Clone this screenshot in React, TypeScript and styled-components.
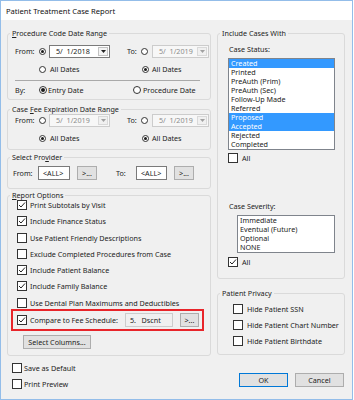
import React from "react";
import styled, { createGlobalStyle } from "styled-components";

const Global = createGlobalStyle`
  html, body { margin: 0; padding: 0; background: #ffffff; }
  body {
    font-family: "Noto Sans", "Liberation Sans", sans-serif;
    font-size: 7.2px;
    color: #222222;
  }
  * { box-sizing: border-box; }
`;

const Window = styled.div`
  width: 353px;
  height: 400px;
  border: 1px solid #93bde9;
  background: #f0f0f0;
  display: flex;
  flex-direction: column;
`;

const TitleBar = styled.div`
  flex: none;
  height: 19px;
  background: #ffffff;
  display: flex;
  align-items: center;
  padding-left: 5px;
  font-size: 7.6px;
  color: #111111;
`;

const Body = styled.div`
  flex: 1;
  display: flex;
  gap: 6px;
  padding: 9px 7px 0 6px;
`;

const Column = styled.div<{ $w: number }>`
  width: ${(p) => p.$w}px;
  display: flex;
  flex-direction: column;
`;

const Group = styled.fieldset<{ $mt?: number }>`
  margin: ${(p) => p.$mt ?? 0}px 0 0 0;
  padding: 0;
  min-width: 0;
  border: 1px solid #dadada;
  border-radius: 3px;
`;

const Legend = styled.legend`
  margin-left: 2px;
  padding: 0 2px;
  line-height: 8px;
  font-size: 7.2px;
  color: #222222;
`;

const GroupBody = styled.div<{ $pt: number; $pb: number; $pl: number }>`
  display: flex;
  flex-direction: column;
  padding: ${(p) => p.$pt}px 0 ${(p) => p.$pb}px ${(p) => p.$pl}px;
`;

const Row = styled.div<{ $h?: number; $mt?: number; $pl?: number }>`
  display: flex;
  align-items: center;
  height: ${(p) => p.$h ?? 14}px;
  margin-top: ${(p) => p.$mt ?? 0}px;
  padding-left: ${(p) => p.$pl ?? 0}px;
  white-space: nowrap;
`;

const Half = styled.div<{ $w?: number }>`
  display: flex;
  align-items: center;
  height: 100%;
  ${(p) => (p.$w ? `width: ${p.$w}px;` : "flex: 1;")}
`;

const Label = styled.span<{ $w?: number; $ml?: number }>`
  display: inline-block;
  ${(p) => (p.$w ? `width: ${p.$w}px;` : "")}
  margin-left: ${(p) => p.$ml ?? 0}px;
  flex: none;
`;

const RadioRing = styled.span<{ $size: number; $ml?: number; $mr?: number }>`
  flex: none;
  width: ${(p) => p.$size}px;
  height: ${(p) => p.$size}px;
  margin-left: ${(p) => p.$ml ?? 0}px;
  margin-right: ${(p) => p.$mr ?? 3}px;
  border-radius: 50%;
  border: 1px solid #333333;
  background: #ffffff;
  display: flex;
  align-items: center;
  justify-content: center;
`;

const RadioDot = styled.span<{ $size: number }>`
  width: ${(p) => p.$size}px;
  height: ${(p) => p.$size}px;
  border-radius: 50%;
  background: #1a1a1a;
`;

const Radio = ({ size = 7, checked = false, ml, mr }: { size?: number; checked?: boolean; ml?: number; mr?: number }) => (
  <RadioRing $size={size} $ml={ml} $mr={mr}>{checked && <RadioDot $size={size - 4} />}</RadioRing>
);

const Combo = styled.div<{ $w: number; $disabled?: boolean }>`
  flex: none;
  width: ${(p) => p.$w}px;
  height: 13px;
  border: 1px solid ${(p) => (p.$disabled ? "#cccccc" : "#7a7a7a")};
  background: ${(p) => (p.$disabled ? "#f7f7f7" : "#ffffff")};
  color: ${(p) => (p.$disabled ? "#8c8c8c" : "#222222")};
  display: flex;
  align-items: center;
  padding-left: 6px;
  white-space: pre;
`;

const ComboButton = styled.span<{ $disabled?: boolean }>`
  margin-left: auto;
  margin-right: 1px;
  width: 10px;
  height: 9px;
  border: 1px solid ${(p) => (p.$disabled ? "#d9d9d9" : "#c2c2c2")};
  background: ${(p) => (p.$disabled ? "#f0f0f0" : "#f4f4f4")};
  display: flex;
  align-items: center;
  justify-content: center;
`;

const DateCombo = ({ w, value, disabled }: { w: number; value: string; disabled?: boolean }) => (
  <Combo $w={w} $disabled={disabled}>
    {value}
    <ComboButton $disabled={disabled}>
      <svg width="5" height="3" viewBox="0 0 5 3">
        <polygon points="0,0 5,0 2.5,3" fill={disabled ? "#a0a0a0" : "#222222"} />
      </svg>
    </ComboButton>
  </Combo>
);

const Separator = styled.div`
  width: 185px;
  height: 1px;
  margin-top: 4px;
  background: #a9a9a9;
`;

const Field = styled.div<{ $w: number; $ml?: number; $readonly?: boolean }>`
  flex: none;
  width: ${(p) => p.$w}px;
  height: 14px;
  margin-left: ${(p) => p.$ml ?? 0}px;
  border: 1px solid ${(p) => (p.$readonly ? "#cccccc" : "#7a7a7a")};
  background: ${(p) => (p.$readonly ? "#f0f0f0" : "#ffffff")};
  display: flex;
  align-items: center;
  padding-left: 4px;
  white-space: pre;
`;

const Button = styled.div<{ $w: number; $h?: number; $ml?: number; $default?: boolean }>`
  flex: none;
  width: ${(p) => p.$w}px;
  height: ${(p) => p.$h ?? 14}px;
  margin-left: ${(p) => p.$ml ?? 0}px;
  border: 1px solid ${(p) => (p.$default ? "#0078d7" : "#adadad")};
  background: #e1e1e1;
  display: flex;
  align-items: center;
  justify-content: center;
  color: #222222;
  white-space: nowrap;
`;

const Box = styled.span<{ $mr?: number }>`
  flex: none;
  width: 10px;
  height: 10px;
  margin-right: ${(p) => p.$mr ?? 3}px;
  border: 1px solid #333333;
  background: #ffffff;
  display: flex;
  align-items: center;
  justify-content: center;
`;

const Check = ({ checked = false, mr }: { checked?: boolean; mr?: number }) => (
  <Box $mr={mr}>
    {checked && (
      <svg width="8" height="8" viewBox="0 0 8 8">
        <polyline points="1,4 3,6 7,1.5" fill="none" stroke="#222222" strokeWidth="1" />
      </svg>
    )}
  </Box>
);

const CheckRow = styled.div<{ $mt?: number; $pl?: number; $h?: number }>`
  display: flex;
  align-items: center;
  height: ${(p) => p.$h ?? 12}px;
  margin-top: ${(p) => p.$mt ?? 0}px;
  padding-left: ${(p) => p.$pl ?? 0}px;
  white-space: nowrap;
`;

const Highlight = styled.div`
  width: 193px;
  height: 22px;
  border: 2px solid #e8252a;
  display: flex;
  align-items: center;
  padding-left: 4px;
  white-space: nowrap;
`;

const ListBox = styled.div<{ $w: number; $ml?: number; $mt?: number }>`
  width: ${(p) => p.$w}px;
  margin-left: ${(p) => p.$ml ?? 0}px;
  margin-top: ${(p) => p.$mt ?? 4}px;
  border: 1px solid #7f848c;
  background: #ffffff;
  display: flex;
  flex-direction: column;
`;

const ListItem = styled.div<{ $selected?: boolean }>`
  height: 9px;
  line-height: 9px;
  padding-left: 2px;
  background: ${(p) => (p.$selected ? "#3399ff" : "transparent")};
  color: ${(p) => (p.$selected ? "#ffffff" : "#222222")};
  white-space: nowrap;
`;

const ButtonRow = styled.div`
  display: flex;
  justify-content: flex-end;
  gap: 7px;
  margin-top: 18px;
  padding-right: 1px;
`;

const statuses: [string, boolean][] = [
  ["Created", true],
  ["Printed", false],
  ["PreAuth (Prim)", false],
  ["PreAuth (Sec)", false],
  ["Follow-Up Made", false],
  ["Referred", false],
  ["Proposed", true],
  ["Accepted", true],
  ["Rejected", false],
  ["Completed", false],
];

const severities = ["Immediate", "Eventual (Future)", "Optional", "NONE"];

const reportOptions: [string, boolean][] = [
  ["Print Subtotals by Visit", true],
  ["Include Finance Status", true],
  ["Use Patient Friendly Descriptions", false],
  ["Exclude Completed Procedures from Case", false],
  ["Include Patient Balance", true],
  ["Include Family Balance", true],
  ["Use Dental Plan Maximums and Deductibles", false],
];

export default function App() {
  return (
    <>
      <Global />
      <Window>
        <TitleBar>Patient Treatment Case Report</TitleBar>
        <Body>
          <Column $w={204}>
            <Group>
              <Legend>
                <u>P</u>rocedure Code Date Range
              </Legend>
              <GroupBody $pt={7} $pb={2} $pl={7}>
                <Row>
                  <Half $w={112}>
                    <Label $w={24}>From:</Label>
                    <Radio checked mr={3} />
                    <DateCombo w={61} value="5/  1/2018" />
                  </Half>
                  <Half>
                    <Label $w={14}>To:</Label>
                    <Radio mr={4} />
                    <DateCombo w={57} value="5/  1/2019" disabled />
                  </Half>
                </Row>
                <Row $mt={4}>
                  <Half $w={112}>
                    <Radio ml={24} mr={4} />
                    <Label>All Dates</Label>
                  </Half>
                  <Half>
                    <Radio ml={15} mr={3} checked />
                    <Label>All Dates</Label>
                  </Half>
                </Row>
                <Separator />
                <Row $mt={2}>
                  <Half $w={112}>
                    <Label $w={24}>By:</Label>
                    <Radio size={8} checked mr={1} />
                    <Label>Entry Date</Label>
                  </Half>
                  <Half>
                    <Radio size={8} ml={6} mr={2} />
                    <Label>Procedure Date</Label>
                  </Half>
                </Row>
              </GroupBody>
            </Group>

            <Group $mt={5}>
              <Legend>
                Case <u>F</u>ee Expiration Date Range
              </Legend>
              <GroupBody $pt={0} $pb={4} $pl={7}>
                <Row>
                  <Half $w={112}>
                    <Label $w={24}>From:</Label>
                    <Radio mr={3} />
                    <DateCombo w={61} value="5/  1/2019" disabled />
                  </Half>
                  <Half>
                    <Label $w={14}>To:</Label>
                    <Radio mr={4} />
                    <DateCombo w={57} value="5/  1/2019" disabled />
                  </Half>
                </Row>
                <Row $mt={4}>
                  <Half $w={112}>
                    <Radio ml={24} mr={4} checked />
                    <Label>All Dates</Label>
                  </Half>
                  <Half>
                    <Radio ml={15} mr={3} checked />
                    <Label>All Dates</Label>
                  </Half>
                </Row>
              </GroupBody>
            </Group>

            <Group $mt={3}>
              <Legend>
                Select Pro<u>v</u>ider
              </Legend>
              <GroupBody $pt={5} $pb={8} $pl={5}>
                <Row>
                  <Label $w={25}>From:</Label>
                  <Field $w={32}>&lt;ALL&gt;</Field>
                  <Button $w={20} $ml={7}>&gt;...</Button>
                  <Label $w={20} $ml={19}>To:</Label>
                  <Field $w={31}>&lt;ALL&gt;</Field>
                  <Button $w={20} $ml={7}>&gt;...</Button>
                </Row>
              </GroupBody>
            </Group>

            <Group $mt={2}>
              <Legend>
                <u>R</u>eport Options
              </Legend>
              <GroupBody $pt={0} $pb={6} $pl={3}>
                {reportOptions.map(([label, checked], i) => (
                  <CheckRow key={label} $pl={6} $mt={i === 0 ? 0 : 4.3}>
                    <Check checked={checked} />
                    {label}
                  </CheckRow>
                ))}
                <Highlight>
                  <Check checked />
                  Compare to Fee Schedule:
                  <Field $w={48} $ml={7} $readonly>
                    {"5.   Dscnt"}
                  </Field>
                  <Button $w={19} $ml={7}>&gt;...</Button>
                </Highlight>
                <Row $mt={4}>
                  <Button $w={68} $ml={12}>Select Columns...</Button>
                </Row>
              </GroupBody>
            </Group>

            <CheckRow $mt={6} $pl={5}>
              <Check mr={2} />
              Save as Default
            </CheckRow>
            <CheckRow $mt={4} $pl={5}>
              <Check mr={2} />
              Print Preview
            </CheckRow>
          </Column>

          <Column $w={128}>
            <Group>
              <Legend>Include Cases With</Legend>
              <GroupBody $pt={7} $pb={11} $pl={10}>
                <Row $h={10}>
                  <Label $ml={1}>Case Status:</Label>
                </Row>
                <ListBox $w={107}>
                  {statuses.map(([s, sel]) => (
                    <ListItem key={s} $selected={sel}>
                      {s}
                    </ListItem>
                  ))}
                </ListBox>
                <CheckRow $mt={3} $h={10}>
                  <Check mr={4} />
                  All
                </CheckRow>
                <Row $h={10} $mt={38}>
                  <Label $ml={1}>Case Severity:</Label>
                </Row>
                <ListBox $w={98} $ml={9}>
                  {severities.map((s) => (
                    <ListItem key={s}>{s}</ListItem>
                  ))}
                </ListBox>
                <CheckRow $mt={4} $h={10}>
                  <Check checked mr={4} />
                  All
                </CheckRow>
              </GroupBody>
            </Group>

            <Group $mt={10}>
              <Legend>Patient Privacy</Legend>
              <GroupBody $pt={6} $pb={7} $pl={15}>
                <CheckRow>
                  <Check mr={4} />
                  Hide Patient SSN
                </CheckRow>
                <CheckRow $mt={4}>
                  <Check mr={4} />
                  Hide Patient Chart Number
                </CheckRow>
                <CheckRow $mt={4}>
                  <Check mr={4} />
                  Hide Patient Birthdate
                </CheckRow>
              </GroupBody>
            </Group>

            <ButtonRow>
              <Button $w={49} $default>
                OK
              </Button>
              <Button $w={49}>Cancel</Button>
            </ButtonRow>
          </Column>
        </Body>
      </Window>
    </>
  );
}
